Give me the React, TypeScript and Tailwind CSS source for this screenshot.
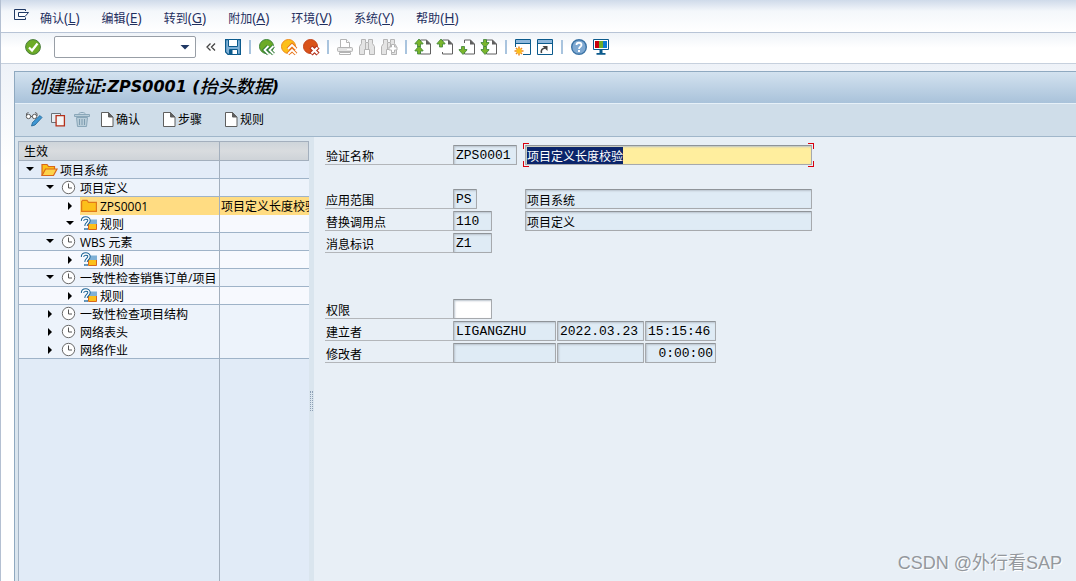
import { useEffect, useRef } from "react";
import type { ReactElement, ReactNode } from "react";

const menus = [
  { label: "确认", mnemonic: "L" },
  { label: "编辑", mnemonic: "E" },
  { label: "转到", mnemonic: "G" },
  { label: "附加", mnemonic: "A" },
  { label: "环境", mnemonic: "V" },
  { label: "系统", mnemonic: "Y" },
  { label: "帮助", mnemonic: "H" },
];

const toolGroups = [
  [
    { icon: "back", label: "后退" },
    { icon: "exit", label: "退出" },
    { icon: "cancel", label: "取消" },
  ],
  [
    { icon: "print", label: "打印" },
    { icon: "find", label: "查找" },
    { icon: "find-next", label: "查找下一个" },
  ],
  [
    { icon: "first-page", label: "第一页" },
    { icon: "prev-page", label: "上一页" },
    { icon: "next-page", label: "下一页" },
    { icon: "last-page", label: "最后一页" },
  ],
  [
    { icon: "session", label: "新建会话" },
    { icon: "shortcut", label: "生成快捷方式" },
  ],
  [
    { icon: "help", label: "帮助" },
    { icon: "layout", label: "定制本地布局" },
  ],
];

type Node = {
  level: 1 | 2 | 3;
  icon: string;
  text: string;
  desc?: string;
  open?: boolean;
  line?: boolean;
  selected?: boolean;
};

const nodes: Node[] = [
  { level: 1, icon: "folder-open", text: "项目系统", open: true, line: true },
  { level: 2, icon: "clock", text: "项目定义", open: true, line: true },
  { level: 3, icon: "folder", text: "ZPS0001", desc: "项目定义长度校验", selected: true },
  { level: 3, icon: "rule", text: "规则", open: true, line: true },
  { level: 2, icon: "clock", text: "WBS 元素", open: true, line: true },
  { level: 3, icon: "rule", text: "规则", line: true },
  { level: 2, icon: "clock", text: "一致性检查销售订单/项目", open: true, line: true },
  { level: 3, icon: "rule", text: "规则", line: true },
  { level: 2, icon: "clock", text: "一致性检查项目结构" },
  { level: 2, icon: "clock", text: "网络表头" },
  { level: 2, icon: "clock", text: "网络作业", line: true },
];

const indent = { 1: "pl-px", 2: "pl-[21px]", 3: "pl-[41px]" };
const rowColor = { 1: "bg-[#e3ecf8]", 2: "bg-[#edf3fb]", 3: "bg-[#f7f9fe]" };

const page = <path d="M5.500 4V1h6l4 4v10h-10v-2" fill="#fff" stroke="#5f5f5f" />;
const fold = <path d="M11 .5l5 5h-5z" fill="#5f5f5f" />;
const up = "M0 4.500L4 0l4 4.500v.5H5.500v3h-3V5H0z";
const down = "M0 3.500L4 8l4-4.500V3H5.500V0h-3v3H0z";
const binoculars = (
  <path
    d="M2.500.5h4v3h3v-3h4v4l2 3v8h-5v-5h-5v5h-5v-8l2-3zM6.500 4v6M9.500 4v6"
    fill="#e4e4e4"
    stroke="#b4b4b4"
  />
);

// 16x16 glyphs shared by the system bar, the application bar and the tree.
const glyphs: Record<string, ReactElement> = {
  menu: (
    <g fill="none" stroke="#1f3864">
      <path d="M12.500 3V1.500h-11v10h11V9.500" />
      <path d="M5.500 4.500h10L12 8.500H5.500z" fill="#fff" />
    </g>
  ),
  ok: (
    <>
      <circle cx="8" cy="8" r="7.400" fill="#6cab27" stroke="#4a7d3d" />
      <path d="M4 8.500l3 3 5.500-7" fill="none" stroke="#fff" strokeWidth="2.200" />
    </>
  ),
  save: (
    <>
      <path d="M.6.600h14.800v14.800H3L.6 13z" fill="#7fb0d6" stroke="#0b5a8c" strokeWidth="1.200" />
      <path d="M3.500.5h9v7h-9z" fill="#fff" stroke="#0b5a8c" />
      <path d="M4.500 10.500h8v5h-8z" fill="#fff" stroke="#0b5a8c" />
      <path d="M5 11h2.500v4H5z" fill="#0b5a8c" />
    </>
  ),
  back: (
    <>
      <circle cx="7.500" cy="7.500" r="7" fill="#6cab27" stroke="#3d8438" />
      <path d="M9.500 7l-4 4 4 4M14.500 7l-4 4 4 4" fill="none" stroke="#2e7b33" strokeWidth="3.800" />
      <path d="M9.500 7l-4 4 4 4M14.500 7l-4 4 4 4" fill="none" stroke="#fff" strokeWidth="1.800" />
    </>
  ),
  exit: (
    <>
      <circle cx="7.500" cy="7.500" r="7" fill="#fcc01a" stroke="#ee8a1c" />
      <path d="M7 10l4-4 4 4M7 15l4-4 4 4" fill="none" stroke="#e8741a" strokeWidth="3.800" />
      <path d="M7 10l4-4 4 4M7 15l4-4 4 4" fill="none" stroke="#fff" strokeWidth="1.800" />
    </>
  ),
  cancel: (
    <>
      <circle cx="7.500" cy="7.500" r="7" fill="#d9531a" stroke="#c4441a" />
      <path d="M8 8l7 7M15 8l-7 7" stroke="#b5301a" strokeWidth="4.500" />
      <path d="M8.500 8.500l6 6M14.500 8.500l-6 6" stroke="#fff" strokeWidth="2.200" />
    </>
  ),
  print: (
    <g fill="#fff" stroke="#b4b4b4">
      <path d="M3.500 8V.5h6l3 3V8" />
      <path d="M9.500.5v3h3" />
      <rect x=".5" y="8.500" width="15" height="4" rx="1" fill="#e4e4e4" />
      <path d="M2.500 13.500h11v2h-11z" />
      <path d="M10 10.500h4" stroke="#fff" />
    </g>
  ),
  find: binoculars,
  "find-next": (
    <>
      {binoculars}
      <path d="M10.500 5.500h3v2.500h2.500v3h-2.500v2.500h-3V11H8V8h2.500z" fill="#fff" stroke="#b4b4b4" />
    </>
  ),
  "first-page": (
    <>
      {page}
      {fold}
      <g fill="#7ab52c" stroke="#3d8438" strokeWidth=".8">
        <path d={up} />
        <path d={up} transform="translate(0 7)" />
      </g>
    </>
  ),
  "prev-page": (
    <>
      {page}
      {fold}
      <path d={up} fill="#7ab52c" stroke="#3d8438" strokeWidth=".8" />
    </>
  ),
  "next-page": (
    <>
      {page}
      {fold}
      <path d={down} transform="translate(0 7.500)" fill="#7ab52c" stroke="#3d8438" strokeWidth=".8" />
    </>
  ),
  "last-page": (
    <>
      {page}
      {fold}
      <g fill="#7ab52c" stroke="#3d8438" strokeWidth=".8">
        <path d={down} transform="translate(0 .5)" />
        <path d={down} transform="translate(0 7.500)" />
      </g>
    </>
  ),
  session: (
    <>
      <path d="M.5.500h15v15h-15z" fill="#fff" stroke="#0b5a8c" />
      <path d="M1 1h14v3.500H1z" fill="#8fb8dc" />
      <path d="M1 4.500h14" stroke="#0b5a8c" />
      <path d="M0 8h8v8H0z" fill="#fff" />
      <path d="M4 7.500v9M-.5 12h9M1 9l6 6M7 9l-6 6" stroke="#ee8a1c" strokeWidth="1.500" />
      <circle cx="4" cy="12" r="2.500" fill="#fcc01a" />
    </>
  ),
  shortcut: (
    <>
      <path d="M.5.500h15v15h-15z" fill="#fff" stroke="#0b5a8c" />
      <path d="M1 1h14v3.500H1z" fill="#8fb8dc" />
      <path d="M1 4.500h14" stroke="#0b5a8c" />
      <path d="M4.500 14c-1-3 1-4.500 3.500-5" fill="none" stroke="#444" strokeWidth="1.600" />
      <path d="M5.500 7h5v5z" fill="#444" />
    </>
  ),
  help: (
    <>
      <circle cx="8" cy="8" r="7.300" fill="#7fa9d2" stroke="#3b73a5" strokeWidth="1.400" />
      <path d="M5.500 6C5.500 3 10.500 3 10.500 6c0 1.800-2.500 1.800-2.500 4" fill="none" stroke="#fff" strokeWidth="1.800" />
      <path d="M7 11h2v2H7z" fill="#fff" />
    </>
  ),
  layout: (
    <>
      <path d="M.5.500h15v10h-15z" fill="#fff" stroke="#0b5a8c" />
      <path d="M2 2h4v7H2z" fill="#c8000a" />
      <path d="M6 2h4v7H6z" fill="#6cab27" />
      <path d="M10 2h4v7h-4z" fill="#0a7ad0" />
      <path d="M6.500 11h3v3h3v1.800h-9V14h3z" fill="#0b5a8c" />
    </>
  ),
  toggle: (
    <>
      <g fill="#fff" stroke="#5f5f5f">
        <circle cx="2.500" cy="4.500" r="2.200" />
        <circle cx="8.500" cy="4.500" r="2.200" />
        <path d="M.5 4V1.500L2.500.5M11 4V1.500L9 .5M4.500 4.500h2" fill="none" />
      </g>
      <path d="M5.500 14l1-3.500 7.500-7 2 2-7 7.500z" fill="#3f97d3" stroke="#1c5f91" strokeWidth=".8" />
    </>
  ),
  copy: (
    <>
      <path d="M1.500 1.500h9v9h-9z" fill="#e6edf3" stroke="#6a7076" />
      <path d="M6.100 3.600h8.300v10.300H6.100z" fill="#f4f4f4" stroke="#b5301a" strokeWidth="1.300" />
    </>
  ),
  trash: (
    <g fill="none" stroke="#8aa7b9">
      <path d="M4.500 2.500c0-2.700 7-2.700 7 0" />
      <path d="M.5 2.500h15v2H.5z" fill="#b9cdd9" />
      <path d="M2.500 5.500h11l-1 9h-9z" fill="#b9cdd9" />
      <path d="M5.500 7v6M8 7v6M10.500 7v6" stroke="#7e9cb0" />
    </g>
  ),
  document: (
    <>
      <path d="M2.500.5h7l4.500 4.500v9.500H2.500z" fill="#fff" stroke="#5f5f5f" />
      <path d="M9.500.5V5H14z" fill="#5f5f5f" stroke="#5f5f5f" />
    </>
  ),
  "folder-open": (
    <>
      <path d="M1 13.500V2.500h5l1.500 2h6V7" fill="#fcc01a" stroke="#d9671a" strokeWidth="1.200" />
      <path d="M1 13.500L4.500 7H16l-3.500 6.500z" fill="#fdd34a" stroke="#d9671a" strokeWidth="1.200" />
    </>
  ),
  folder: <path d="M.6 13.400V3.600l1-1.200H6l1.500 2h7.900v9z" fill="#fcc01a" stroke="#e07a1a" strokeWidth="1.200" />,
  clock: (
    <>
      <circle cx="7.500" cy="7.500" r="6.200" fill="#fff" stroke="#6a6a6a" />
      <path d="M7.500 3.500v4.500h3.500" fill="none" stroke="#555" />
    </>
  ),
  rule: (
    <>
      <path d="M7.500 5.500h8v8h-8z" fill="#fcc01a" stroke="#d9671a" />
      <path d="M7 3.500h9v4.500H7z" fill="#7fb0d6" />
      <path d="M1.500 5C1.500 1 8 1 8 4.500 8 7 5 7 5 10M5 12v2" fill="none" stroke="#1c6496" strokeWidth="3.400" />
      <path d="M1.500 5C1.500 1 8 1 8 4.500 8 7 5 7 5 10M5 12.500v1" fill="none" stroke="#fff" strokeWidth="1.400" />
    </>
  ),
  opened: <path d="M4 5h8L8 9z" fill="#000" />,
  closed: <path d="M6 4v8l4-4z" fill="#000" />,
};

function Icon({ name }: { name: string }) {
  return (
    <svg className="block size-4 shrink-0 overflow-visible" viewBox="0 0 16 16" aria-hidden="true">
      {glyphs[name]}
    </svg>
  );
}

function IconButton({ icon, label }: { icon: string; label: string }) {
  return (
    <button type="button" aria-label={label} className="shrink-0">
      <Icon name={icon} />
    </button>
  );
}

function MenuBar() {
  return (
    <nav className="flex h-[33px] items-center gap-[11px] border-b border-[#b8c4d6] bg-linear-to-b from-[#cfdaea] via-[#f4f7fb] via-35% to-white pl-3 pt-1 text-[#1f2f5f]">
      <button type="button" aria-label="菜单" className="-mt-1">
        <Icon name="menu" />
      </button>
      <div className="flex gap-[22px]">
        {menus.map((m) => (
          <button key={m.mnemonic} type="button" className="flex items-baseline whitespace-nowrap">
            {m.label}
            <span className="text-sm leading-4">
              (<u>{m.mnemonic}</u>)
            </span>
          </button>
        ))}
      </div>
    </nav>
  );
}

function SystemBar() {
  return (
    <div className="flex h-[31px] items-center gap-[6px] border-b border-[#c6d0dd] bg-linear-to-b from-[#eff3f8] to-white to-50% pb-[2px] pl-6">
      <IconButton icon="ok" label="回车" />
      <div className="ml-[7px] flex h-[22px] w-[142px] items-center rounded-xs border border-[#989ea6] bg-white">
        <input aria-label="命令字段" className="h-full min-w-0 flex-1 px-1 outline-none" />
        <button type="button" aria-label="历史记录" className="px-1">
          <svg className="block h-2 w-3" viewBox="0 0 12 8" aria-hidden="true">
            <path d="M1.500 2h9L6 6.500z" fill="#1f3864" />
          </svg>
        </button>
      </div>
      <button type="button" aria-label="隐藏命令字段" className="flex w-[17px] justify-center">
        <svg className="block h-2 w-3" viewBox="0 0 12 8" fill="none" stroke="#444" strokeWidth="1.300" aria-hidden="true">
          <path d="M5.500.5L2 4l3.500 3.500M10 .5L6.500 4 10 7.500" />
        </svg>
      </button>
      <IconButton icon="save" label="保存" />
      {toolGroups.map((group) => (
        <div key={group[0].icon} className="flex items-center gap-[6px]">
          <span className="mx-[2px] h-[14px] w-[2px] bg-[#a9c4de]" />
          {group.map((t) => (
            <IconButton key={t.icon} icon={t.icon} label={t.label} />
          ))}
        </div>
      ))}
    </div>
  );
}

function CreateButton({ children }: { children: ReactNode }) {
  return (
    <button type="button" className="flex items-center gap-px whitespace-nowrap">
      <Icon name="document" />
      <span className="pt-px">{children}</span>
    </button>
  );
}

function TreeRow({ node }: { node: Node }) {
  const line = node.line ? "border-b border-b-[#9fb3c8]" : "";
  const mark = node.selected ? "bg-[#ffdc82]" : "";
  return (
    <tr className={rowColor[node.level]}>
      <td className={`h-[18px] border-r border-r-[#a3afbd] p-0 ${line} ${indent[node.level]}`}>
        <div className="flex h-[17px] items-center">
          <button type="button" aria-label={node.open ? "折叠" : "展开"} className="flex w-5 shrink-0 justify-center">
            <Icon name={node.open ? "opened" : "closed"} />
          </button>
          <div className={`flex h-[18px] flex-1 items-center gap-[3px] pl-px whitespace-nowrap ${mark}`}>
            <Icon name={node.icon} />
            <span className="pt-[2px]">{node.text}</span>
          </div>
        </div>
      </td>
      <td className={`overflow-hidden p-0 pl-px pt-px whitespace-nowrap ${line} ${mark}`}>{node.desc}</td>
    </tr>
  );
}

function Tree() {
  return (
    <div className="flex w-[291px] shrink-0 flex-col border-l border-[#a3b4c6] bg-[#e1ebf7]">
      <table className="w-full table-fixed border-separate border-spacing-0 leading-4">
        <thead>
          <tr className="bg-linear-to-b from-[#cdd4da] via-[#d9dcdf] to-[#cdd2d7] text-left">
            <th className="h-5 w-[201px] border border-l-0 border-[#a3afbd] p-0 pl-[5px] pt-[2px] font-normal">生效</th>
            <th className="border border-l-0 border-[#a3afbd] p-0" />
          </tr>
        </thead>
        <tbody>
          {nodes.map((n, i) => (
            <TreeRow key={i} node={n} />
          ))}
        </tbody>
      </table>
      <div className="w-[201px] flex-1 border-r border-[#a3afbd]" />
    </div>
  );
}

const box =
  "h-5 shrink-0 rounded-[1px] border border-[#a6a9ad] border-t-[#8f9499] shadow-[inset_1px_1px_2px_#b9c3cc] outline-none";
const mono = "px-[2px] font-['Liberation_Mono','Noto_Sans_CJK_SC',monospace] text-[13px]";
const desc = "w-[287px] px-px pt-px leading-4";

function Field({ id, label, children }: { id: string; label: string; children: ReactNode }) {
  return (
    <div className="flex h-5 items-stretch">
      <label htmlFor={id} className="w-32 shrink-0 border-b border-[#b3b6ba] pl-px pt-1 leading-4">
        {label}
      </label>
      {children}
    </div>
  );
}

function Details() {
  const nameRef = useRef<HTMLInputElement>(null);

  useEffect(() => {
    nameRef.current?.focus();
    nameRef.current?.select();
  }, []);

  return (
    <main className="min-w-0 flex-1 bg-[#e8eff6] pl-[11px] pt-2">
      <Field id="validation" label="验证名称">
        <div className="w-[72px] shrink-0">
          <input id="validation" readOnly defaultValue="ZPS0001" className={`${box} ${mono} w-16 bg-[#dfebf5]`} />
        </div>
        <div className="relative h-5">
          <input
            ref={nameRef}
            aria-label="验证描述"
            defaultValue="项目定义长度校验"
            className={`${box} ${desc} block bg-[#ffee9e] selection:bg-[#0a246a] selection:text-white`}
          />
          <span className="absolute -left-[2px] -top-[2px] size-[6px] border-l border-t border-[#d9000c]" />
          <span className="absolute -right-[2px] -top-[2px] size-[6px] border-r border-t border-[#d9000c]" />
          <span className="absolute -bottom-[2px] -left-[2px] size-[6px] border-b border-l border-[#d9000c]" />
          <span className="absolute -bottom-[2px] -right-[2px] size-[6px] border-b border-r border-[#d9000c]" />
        </div>
      </Field>

      <div className="mt-6 space-y-[2px]">
        <Field id="area" label="应用范围">
          <div className="w-[72px] shrink-0">
            <input id="area" readOnly defaultValue="PS" className={`${box} ${mono} w-6 bg-[#dfebf5]`} />
          </div>
          <input aria-label="应用范围描述" readOnly defaultValue="项目系统" className={`${box} ${desc} bg-[#dfebf5]`} />
        </Field>
        <Field id="callup" label="替换调用点">
          <div className="w-[72px] shrink-0">
            <input id="callup" readOnly defaultValue="110" className={`${box} ${mono} w-[39px] bg-[#dfebf5]`} />
          </div>
          <input aria-label="调用点描述" readOnly defaultValue="项目定义" className={`${box} ${desc} bg-[#dfebf5]`} />
        </Field>
        <Field id="message" label="消息标识">
          <input id="message" readOnly defaultValue="Z1" className={`${box} ${mono} w-[39px] bg-[#dfebf5]`} />
        </Field>
      </div>

      <div className="mt-[46px] space-y-[2px]">
        <Field id="auth" label="权限">
          <input id="auth" className={`${box} ${mono} w-[39px] bg-white`} />
        </Field>
        <Field id="creator" label="建立者">
          <div className="flex gap-px">
            <input id="creator" readOnly defaultValue="LIGANGZHU" className={`${box} ${mono} w-[103px] bg-[#dfebf5]`} />
            <input aria-label="建立日期" readOnly defaultValue="2022.03.23" className={`${box} ${mono} w-[87px] bg-[#dfebf5]`} />
            <input aria-label="建立时间" readOnly defaultValue="15:15:46" className={`${box} ${mono} w-[71px] bg-[#dfebf5]`} />
          </div>
        </Field>
        <Field id="changer" label="修改者">
          <div className="flex gap-px">
            <input id="changer" readOnly className={`${box} ${mono} w-[103px] bg-[#dfebf5]`} />
            <input aria-label="修改日期" readOnly className={`${box} ${mono} w-[87px] bg-[#dfebf5]`} />
            <input aria-label="修改时间" readOnly defaultValue="0:00:00" className={`${box} ${mono} w-[71px] bg-[#dfebf5] text-right`} />
          </div>
        </Field>
      </div>
    </main>
  );
}

export default function App() {
  return (
    <div className="relative flex min-h-screen flex-col border-l border-[#b4c0d2] bg-white font-['Open_Sans','Noto_Sans_CJK_SC',sans-serif] text-xs text-black">
      <MenuBar />
      <SystemBar />
      <div className="flex flex-1 flex-col bg-linear-to-b from-[#eef2f8] to-white to-20% pl-[13px] pt-[7px]">
        <div className="flex flex-1 flex-col border-l border-t border-[#8fa9c0] bg-[#dae5ee]">
          <h1 className="flex h-8 items-center border-b border-[#e6f0f8] bg-linear-to-b from-[#d3e2ef] to-[#a9c2da] pb-[2px] pl-[14px] font-['DejaVu_Sans','Noto_Sans_CJK_SC',sans-serif] text-base font-bold italic whitespace-pre">
            <span className="text-lg font-medium">创建验证</span>:ZPS0001 (<span className="text-lg font-medium">抬头数据</span>)
          </h1>
          <div className="flex h-[33px] items-center border-b border-[#a0b6ca] bg-[#cfdde9] pb-px pl-[11px]">
            <div className="flex items-center gap-2">
              <IconButton icon="toggle" label="显示/更改" />
              <IconButton icon="copy" label="复制" />
              <IconButton icon="trash" label="删除" />
            </div>
            <div className="ml-[9px] flex items-center gap-[21px]">
              <CreateButton>确认</CreateButton>
              <CreateButton>步骤</CreateButton>
              <CreateButton>规则</CreateButton>
            </div>
          </div>
          <div className="flex flex-1">
            <div className="flex pl-[3px] pt-1">
              <Tree />
            </div>
            <div className="w-[5px] shrink-0 pt-[254px] pl-px">
              <div className="h-5 w-[3px] border-x border-dotted border-[#8d9fb4]" />
            </div>
            <Details />
          </div>
        </div>
      </div>
      <p className="absolute bottom-1 right-[14px] font-['Liberation_Sans','Noto_Sans_CJK_SC',sans-serif] text-lg text-[#94989d] [text-shadow:1px_1px_0_#fff]">
        CSDN @外行看SAP
      </p>
    </div>
  );
}
